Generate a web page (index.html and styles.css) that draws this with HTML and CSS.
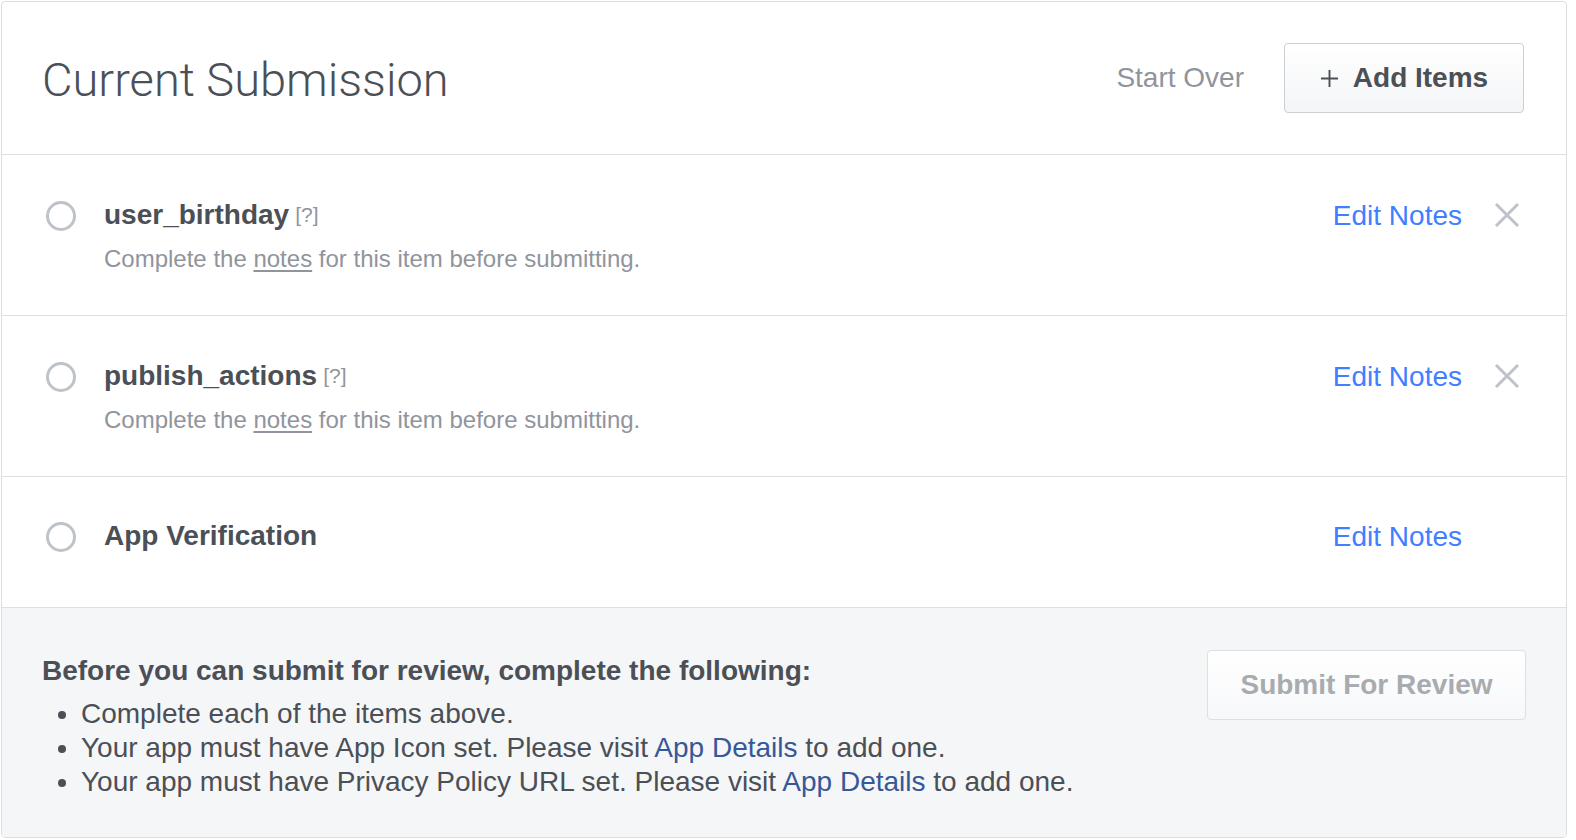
FILE: index.html
```html
<!DOCTYPE html>
<html lang="en">
<head>
    <meta charset="UTF-8">
    <title>Current Submission</title>
    <link rel="stylesheet" href="styles.css">
</head>
<body>
    <div class="submission">
        <div class="submission_header">
            <h1 class="submission_title">Current Submission</h1>
            <a class="start_over">Start Over</a>
            <button class="add_items" type="button">
                <svg class="plus_icon" viewBox="0 0 20 20" width="19" height="19"><path d="M10 1v18M1 10h18" stroke="#4b4f56" stroke-width="2" fill="none"/></svg>
                Add Items
            </button>
        </div>

        <div class="item_row">
            <span class="item_circle"></span>
            <div class="item_body">
                <div class="item_name">user_birthday<span class="item_help">[?]</span></div>
                <div class="item_note">Complete the <u>notes</u> for this item before submitting.</div>
            </div>
            <a class="edit_notes">Edit Notes</a>
            <span class="remove_item">
                <svg viewBox="0 0 26 26" width="26" height="26"><path d="M2 2l22 22M24 2L2 24" stroke="#bec3c9" stroke-width="3" fill="none"/></svg>
            </span>
        </div>

        <div class="item_row">
            <span class="item_circle"></span>
            <div class="item_body">
                <div class="item_name">publish_actions<span class="item_help">[?]</span></div>
                <div class="item_note">Complete the <u>notes</u> for this item before submitting.</div>
            </div>
            <a class="edit_notes">Edit Notes</a>
            <span class="remove_item">
                <svg viewBox="0 0 26 26" width="26" height="26"><path d="M2 2l22 22M24 2L2 24" stroke="#bec3c9" stroke-width="3" fill="none"/></svg>
            </span>
        </div>

        <div class="item_row item_row_single">
            <span class="item_circle"></span>
            <div class="item_body">
                <div class="item_name">App Verification</div>
            </div>
            <a class="edit_notes">Edit Notes</a>
            <span class="remove_item"></span>
        </div>

        <div class="submission_footer">
            <div class="requirements">
                <div class="requirements_title">Before you can submit for review, complete the following:</div>
                <ul class="requirements_list">
                    <li>Complete each of the items above.</li>
                    <li>Your app must have App Icon set. Please visit <a class="details_link">App Details</a> to add one.</li>
                    <li>Your app must have Privacy Policy URL set. Please visit <a class="details_link">App Details</a> to add one.</li>
                </ul>
            </div>
            <button class="submit_review" type="button" disabled>Submit For Review</button>
        </div>
    </div>
</body>
</html>
```

FILE: styles.css
```css
body {
    margin: 0;
    padding: 1px 9px 0 1px;
    background: #fff;
    font-family: "Liberation Sans", Arial, sans-serif;
    color: #4b4f56;
}
a, button {
    cursor: pointer;
}

.submission {
    border: 1px solid #dddfe2;
    border-radius: 4px;
    overflow: hidden;
    background: #fff;
}

.submission_header {
    display: flex;
    align-items: center;
    height: 152px;
    padding: 0 42px 0 40px;
    border-bottom: 1px solid #dddfe2;
}
.submission_title {
    flex: 1;
    margin: 0;
    font-family: Roboto, "Liberation Sans", sans-serif;
    font-weight: 300;
    font-size: 47px;
    color: #4b4f56;
    position: relative;
    top: 1px;
}
.start_over {
    font-size: 28px;
    color: #90949c;
    margin-right: 40px;
}
.add_items {
    display: flex;
    align-items: center;
    justify-content: center;
    gap: 14px;
    width: 240px;
    height: 70px;
    border: 1px solid #ccd0d5;
    border-radius: 4px;
    background: linear-gradient(#fff, #f4f5f7);
    font-family: "Liberation Sans", Arial, sans-serif;
    font-weight: bold;
    font-size: 28px;
    color: #4b4f56;
}
.plus_icon {
    margin-top: 1px;
}

.item_row {
    display: flex;
    align-items: flex-start;
    padding: 42px 46px 38px 44px;
    border-bottom: 1px solid #dddfe2;
    line-height: 36px;
}
.item_row_single {
    padding-top: 41px;
    padding-bottom: 52px;
}
.item_circle {
    width: 24px;
    height: 24px;
    border: 3px solid #bec3c9;
    border-radius: 50%;
    margin-top: 4px;
    margin-right: 28px;
    flex: none;
}
.item_body {
    flex: 1;
}
.item_name {
    font-weight: bold;
    font-size: 28px;
    color: #4b4f56;
}
.item_help {
    font-weight: normal;
    font-size: 21px;
    color: #90949c;
    margin-left: 6px;
    position: relative;
    top: -2px;
}
.item_note {
    margin-top: 6px;
    font-size: 24px;
    color: #90949c;
}
.item_note u {
    text-underline-offset: 3px;
}
.edit_notes {
    font-size: 28px;
    color: #4080ff;
    margin-top: 1px;
}
.remove_item {
    width: 26px;
    height: 26px;
    margin-left: 32px;
    margin-top: 5px;
    flex: none;
}

.submission_footer {
    display: flex;
    align-items: flex-start;
    background: #f5f6f7;
    padding: 42px 40px 38px 40px;
}
.requirements {
    flex: 1;
    padding-top: 3px;
}
.requirements_title {
    font-weight: bold;
    font-size: 28px;
    line-height: 36px;
}
.requirements_list {
    margin: 8px 0 0 0;
    padding-left: 39px;
    font-size: 28px;
    line-height: 34px;
}
.details_link {
    color: #365899;
}
.submit_review {
    width: 319px;
    height: 70px;
    border: 1px solid #dddfe2;
    border-radius: 4px;
    background: linear-gradient(#fff, #f7f8fa);
    font-family: "Liberation Sans", Arial, sans-serif;
    font-weight: bold;
    font-size: 28px;
    color: #a8abaf;
}
```
